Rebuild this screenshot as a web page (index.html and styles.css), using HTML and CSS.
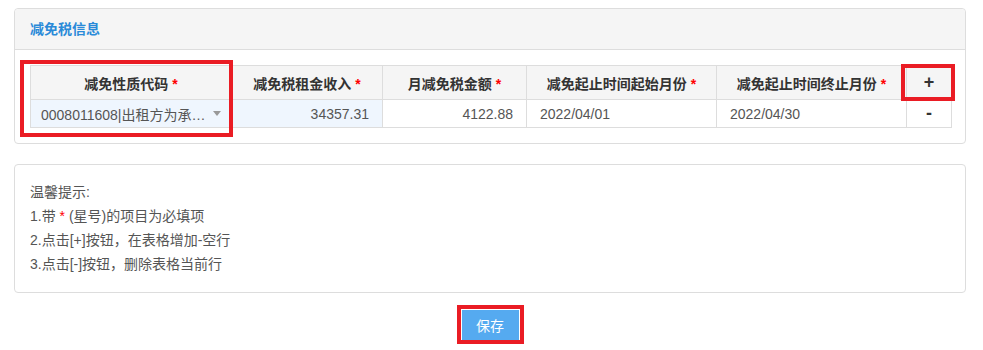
FILE: index.html
```html
<!DOCTYPE html>
<html lang="zh-CN">
<head>
    <meta charset="UTF-8">
    <meta name="viewport" content="width=device-width, initial-scale=1.0">
    <title>减免税信息</title>
    <link rel="stylesheet" href="styles.css">
</head>
<body>
    <div class="page">
        <div class="panel">
            <div class="panel-heading">减免税信息</div>
            <div class="panel-body">
                <table class="grid">
                    <colgroup>
                        <col class="c-code">
                        <col class="c-income">
                        <col class="c-amount">
                        <col class="c-start">
                        <col class="c-end">
                        <col class="c-op">
                    </colgroup>
                    <thead>
                        <tr>
                            <th>减免性质代码 <span class="req">*</span></th>
                            <th>减免税租金收入 <span class="req">*</span></th>
                            <th>月减免税金额 <span class="req">*</span></th>
                            <th>减免起止时间起始月份 <span class="req">*</span></th>
                            <th>减免起止时间终止月份 <span class="req">*</span></th>
                            <th class="op">+</th>
                        </tr>
                    </thead>
                    <tbody>
                        <tr>
                            <td class="editable">
                                <div class="select">
                                    <span class="select-text">0008011608|出租方为承…</span>
                                    <span class="caret"></span>
                                </div>
                            </td>
                            <td class="editable num">34357.31</td>
                            <td class="num">4122.88</td>
                            <td>2022/04/01</td>
                            <td>2022/04/30</td>
                            <td class="op">-</td>
                        </tr>
                    </tbody>
                </table>
            </div>
        </div>

        <div class="panel tips">
            <p>温馨提示:</p>
            <p>1.带 <span class="req">*</span> (星号)的项目为必填项</p>
            <p>2.点击[+]按钮，在表格增加-空行</p>
            <p>3.点击[-]按钮，删除表格当前行</p>
        </div>

        <div class="actions">
            <button type="button" class="btn-save">保存</button>
        </div>
    </div>

    <!-- annotation boxes -->
    <span class="mark mark-code"></span>
    <span class="mark mark-add"></span>
    <span class="mark mark-save"></span>
</body>
</html>
```

FILE: styles.css
```css
/* General Styling */
body {
    margin: 0;
    font-family: "Liberation Sans", "Noto Sans CJK SC", sans-serif;
    font-size: 14px;
    color: #555;
    background: #fff;
}

.page {
    width: 952px;
    padding: 8px 0 0 14px;
}

.panel {
    border: 1px solid #ddd;
    border-radius: 4px;
    background: #fff;
}

.panel-heading {
    height: 40px;
    line-height: 40px;
    padding: 0 15px;
    background: #f5f5f5;
    border-bottom: 1px solid #ddd;
    border-radius: 4px 4px 0 0;
    color: #2a8ad8;
    font-weight: bold;
}

.panel-body {
    padding: 15px 14px 15px 15px;
}

/* Table */
.grid {
    width: 921px;
    border-collapse: collapse;
    table-layout: fixed;
}

.c-code { width: 201px; }
.c-income { width: 151px; }
.c-amount { width: 144px; }
.c-start { width: 190px; }
.c-end { width: 190px; }
.c-op { width: 45px; }

.grid th,
.grid td {
    border: 1px solid #ddd;
    white-space: nowrap;
    overflow: hidden;
}

.grid th {
    height: 33px;
    padding: 0;
    background: #f5f5f5;
    color: #333;
    font-weight: bold;
    text-align: center;
}

.grid td {
    height: 27px;
    padding: 0 13px;
    color: #555;
}

.grid td.editable {
    background: #eff6fe;
}

.grid td.num {
    text-align: right;
}

.grid .op {
    padding: 0;
    text-align: center;
    color: #333;
    font-weight: bold;
    font-size: 18px;
}

.req {
    color: #f00;
}

.select {
    display: flex;
    align-items: center;
    justify-content: space-between;
    margin-left: -3px;
}

.select-text {
    overflow: hidden;
}

.caret {
    flex-shrink: 0;
    width: 0;
    height: 0;
    margin-right: -3px;
    border-left: 4px solid transparent;
    border-right: 4px solid transparent;
    border-top: 5px solid #999;
}

/* Tips */
.tips {
    margin-top: 20px;
    padding: 15px 15px 16px;
}

.tips p {
    margin: 0;
    line-height: 24px;
}

/* Save */
.actions {
    margin-top: 17px;
    text-align: center;
}

.btn-save {
    width: 57px;
    height: 30px;
    border: none;
    border-radius: 0;
    background: #55aaf0;
    color: #fff;
    font-family: "Liberation Sans", "Noto Sans CJK SC", sans-serif;
    font-size: 14px;
    cursor: pointer;
}

/* Annotation boxes */
.mark {
    position: absolute;
    box-sizing: border-box;
    border: 4px solid #ea1c24;
}

.mark-code {
    left: 20px;
    top: 60px;
    width: 213px;
    height: 77px;
}

.mark-add {
    left: 901px;
    top: 64px;
    width: 54px;
    height: 37px;
}

.mark-save {
    left: 457px;
    top: 305px;
    width: 67px;
    height: 39px;
}
```
